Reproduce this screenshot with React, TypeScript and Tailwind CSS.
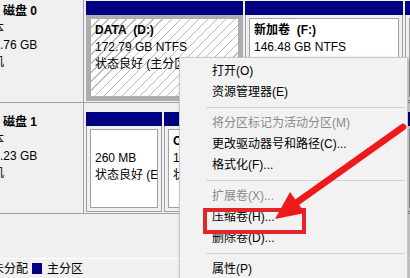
type PartProps = {
  width: string;
  selected?: boolean;
  title?: string;
  lines: string[];
};

function Partition({ width, selected, title, lines }: PartProps) {
  return (
    <div className={`flex shrink-0 flex-col ${width}`}>
      <div className="h-[14px] bg-[#000080]" />
      <div
        className={`min-h-0 flex-1 border border-t-0 p-[3px] ${
          selected ? 'border-[#adadad] bg-[#adadad]' : 'border-[#a0a0a0] bg-[#f0f0f0]'
        }`}
      >
        <div
          className={`h-full overflow-hidden whitespace-nowrap border pl-[4px] pt-[3px] leading-[17px] ${
            selected
              ? 'border-[#adadad] bg-[image:repeating-linear-gradient(135deg,#ffffff_0px,#ffffff_5.4px,#bcbcbc_5.4px,#bcbcbc_6.4px)]'
              : 'border-[#a0a0a0] bg-white'
          }`}
        >
          <div className="h-[17px] font-bold">{title}</div>
          {lines.map((l, i) => (
            <div key={i} className="h-[17px]">
              {l}
            </div>
          ))}
        </div>
      </div>
    </div>
  );
}

function DiskRow({ name, size, children }: { name: string; size: string; children: React.ReactNode }) {
  return (
    <div className="flex h-[111px] shrink-0 border-b border-[#a0a0a0]">
      {/* disk label column, cut off on the left */}
      <div className="w-[84px] shrink-0 overflow-hidden whitespace-nowrap border-r border-[#a0a0a0] pt-[11px] leading-[17px]">
        <div className="pl-[3px] font-bold">{name}</div>
        <div className="ml-[-20px]">基本</div>
        <div className="ml-[-20px]">{size}</div>
        <div className="ml-[-20px]">联机</div>
      </div>
      <div className="flex min-w-0 flex-1 gap-[2px] overflow-hidden pb-[1px] pl-[2px] pt-[9px]">{children}</div>
    </div>
  );
}

const menuItems: (string | { t: string; off?: boolean })[] = [
  { t: '打开(O)' },
  { t: '资源管理器(E)' },
  'sep',
  { t: '将分区标记为活动分区(M)', off: true },
  { t: '更改驱动器号和路径(C)...' },
  { t: '格式化(F)...' },
  'sep',
  { t: '扩展卷(X)...', off: true },
  { t: '压缩卷(H)...' },
  { t: '删除卷(D)...' },
  'sep',
  { t: '属性(P)' },
];

export default function App() {
  return (
    <div className="relative flex h-[278px] w-[410px] flex-col overflow-hidden bg-[#f0f0f0] [font-family:'Liberation_Sans','Noto_Sans_CJK_SC',sans-serif] text-[12px] text-black">
      <div className="-mt-2 flex shrink-0 flex-col">
        <DiskRow name="磁盘 0" size="232.76 GB">
          <Partition width="w-[157px]" selected title={'DATA\u00a0\u00a0(D:)'} lines={['172.79 GB NTFS', '状态良好 (主分区)']} />
          <Partition width="w-[158px]" title={'新加卷\u00a0\u00a0(F:)'} lines={['146.48 GB NTFS', '状态良好']} />
          <Partition width="w-[120px]" title="" lines={['', '']} />
        </DiskRow>
        <DiskRow name="磁盘 1" size="476.23 GB">
          <Partition width="w-[76px]" title="" lines={['260 MB', '状态良好 (EFI 系统分区)']} />
          <Partition width="w-[239px]" title={'C:'} lines={['1', '状']} />
          <Partition width="w-[120px]" title="" lines={['', '']} />
        </DiskRow>
      </div>

      <div className="flex-1" />

      {/* legend */}
      <div className="flex h-[20px] shrink-0 items-center whitespace-nowrap border-t border-white">
        <span className="ml-[-8px]">未分配</span>
        <span className="ml-[4px] h-[11px] w-[10px] bg-[#000080]" />
        <span className="ml-[5px]">主分区</span>
      </div>

      {/* context menu */}
      <div className="absolute left-[179px] top-[57px] h-[240px] w-[229px] border border-[#c6c6c6] bg-[#f2f2f2] pt-[2px] shadow-[2px_2px_4px_rgba(0,0,0,0.3)]">
        {menuItems.map((m, i) =>
          m === 'sep' ? (
            <div key={i} className="flex h-[10px] items-center pl-[26px] pr-[2px]">
              <div className="h-px w-full bg-[#d4d4d4]" />
            </div>
          ) : (
            <div
              key={i}
              className={`flex h-[21px] items-center whitespace-nowrap pl-[32px] ${
                typeof m !== 'string' && m.off ? 'text-[#8a8a8a]' : 'text-black'
              }`}
            >
              {typeof m !== 'string' && m.t}
            </div>
          ),
        )}
      </div>

      {/* annotation: red box + arrow */}
      <div className="absolute left-[203px] top-[208px] h-[26px] w-[103px] border-[4px] border-[#e2252c]" />
      <svg className="pointer-events-none absolute left-0 top-0" width="410" height="278" viewBox="0 0 410 278">
        <line x1="296" y1="203" x2="403" y2="127" stroke="#f01919" strokeWidth="6.5" strokeLinecap="round" />
        <polygon points="275,219 290,192 305,213" fill="#f01919" />
      </svg>
    </div>
  );
}
